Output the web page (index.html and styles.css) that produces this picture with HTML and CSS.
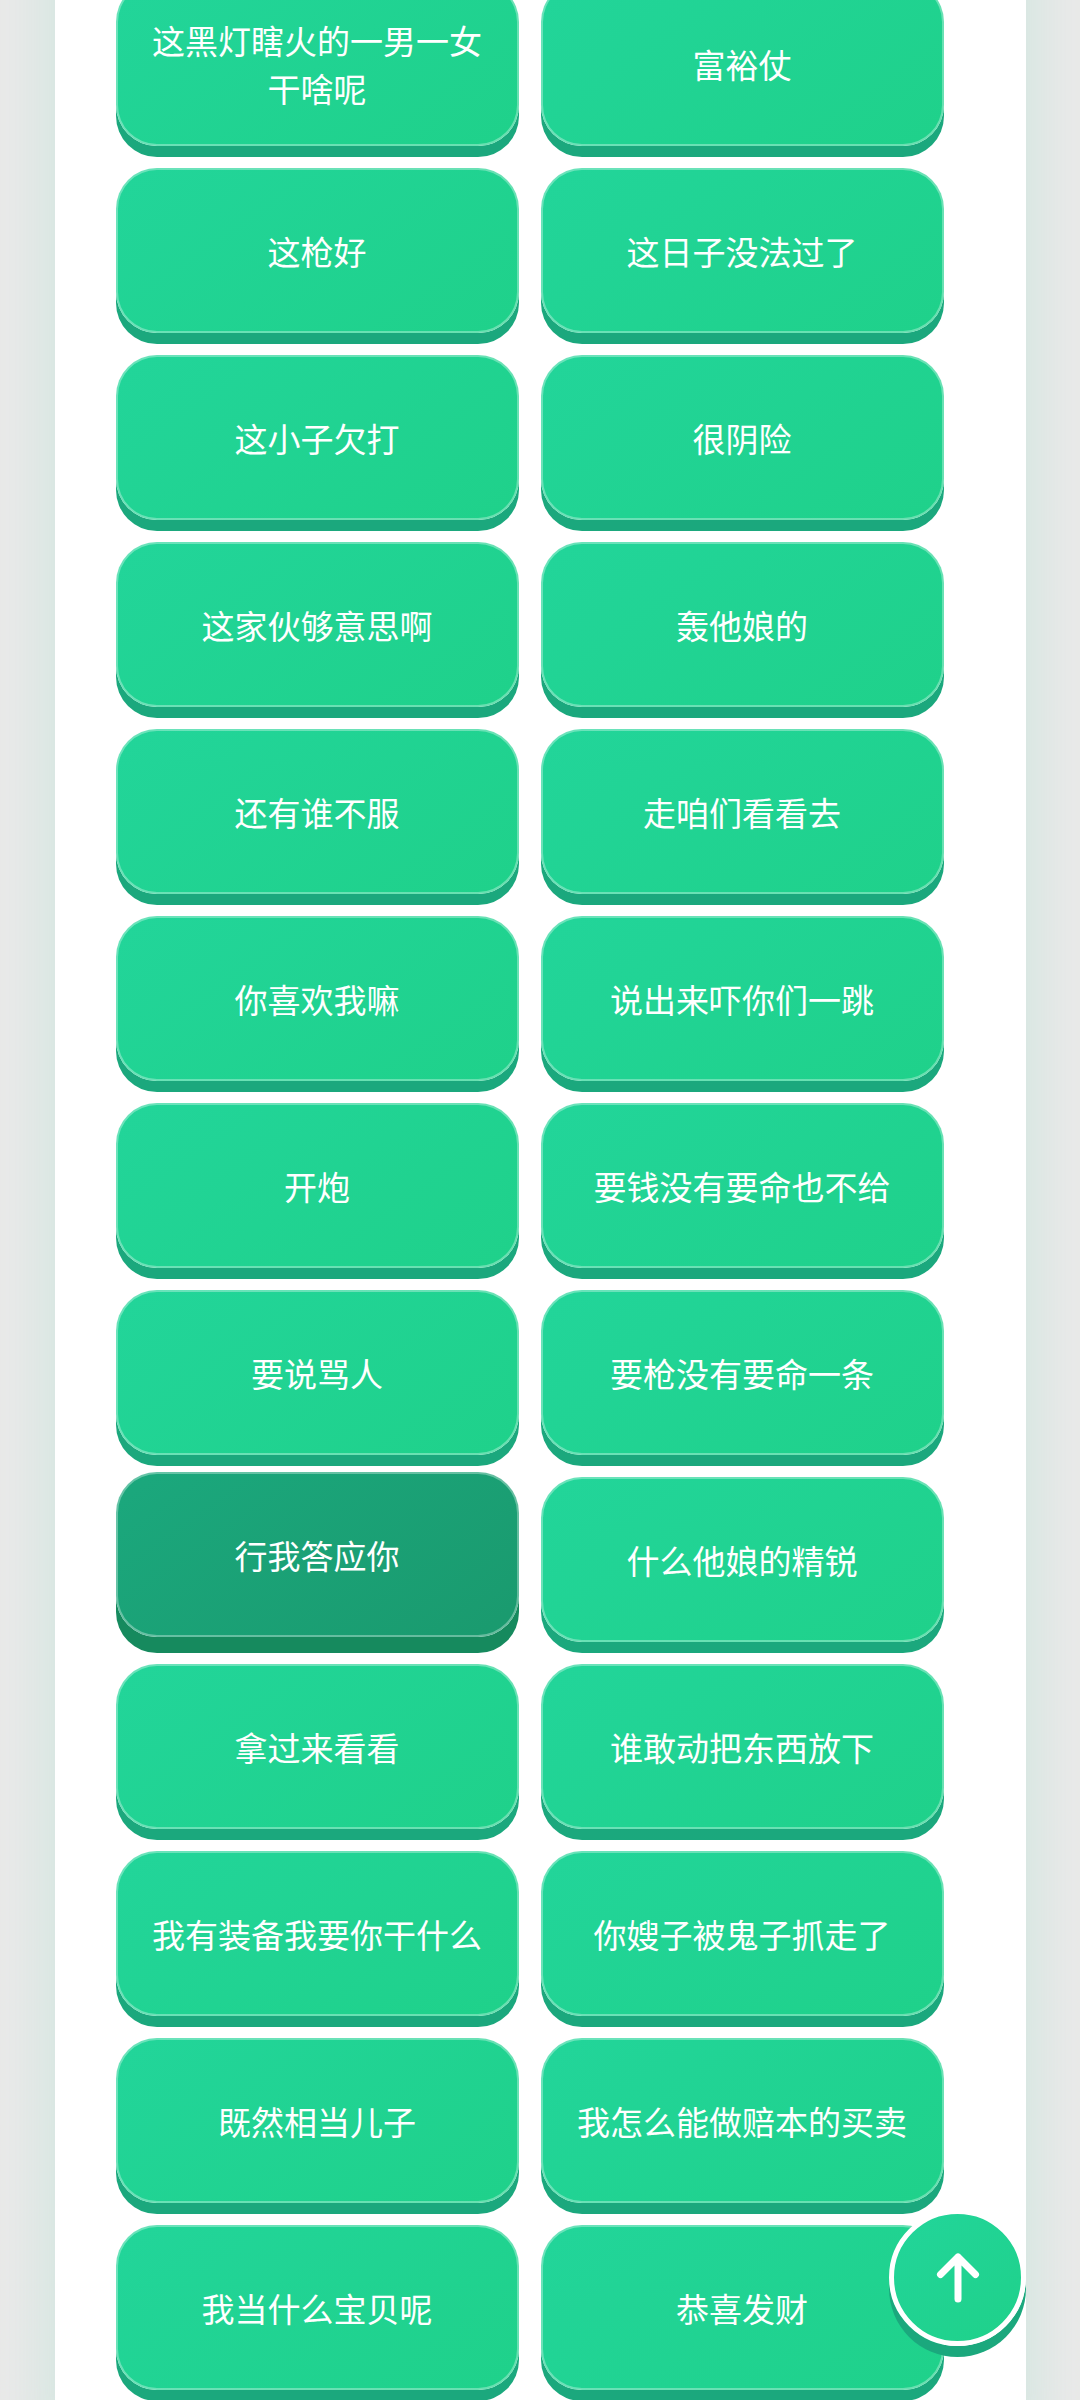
FILE: index.html
```html
<!DOCTYPE html>
<html lang="zh-CN">
  <head>
    <meta charset="UTF-8" />
    <meta name="viewport" content="width=device-width, initial-scale=1.0" />
    <title>语音按钮</title>
    <link rel="stylesheet" href="styles.css">
  </head>
  <body>
    <div class="page">
      <main class="container">
        <button class="voice-btn">这黑灯瞎火的一男一女干啥呢</button>
        <button class="voice-btn">富裕仗</button>
        <button class="voice-btn">这枪好</button>
        <button class="voice-btn">这日子没法过了</button>
        <button class="voice-btn">这小子欠打</button>
        <button class="voice-btn">很阴险</button>
        <button class="voice-btn">这家伙够意思啊</button>
        <button class="voice-btn">轰他娘的</button>
        <button class="voice-btn">还有谁不服</button>
        <button class="voice-btn">走咱们看看去</button>
        <button class="voice-btn">你喜欢我嘛</button>
        <button class="voice-btn">说出来吓你们一跳</button>
        <button class="voice-btn">开炮</button>
        <button class="voice-btn">要钱没有要命也不给</button>
        <button class="voice-btn">要说骂人</button>
        <button class="voice-btn">要枪没有要命一条</button>
        <button class="voice-btn active">行我答应你</button>
        <button class="voice-btn">什么他娘的精锐</button>
        <button class="voice-btn">拿过来看看</button>
        <button class="voice-btn">谁敢动把东西放下</button>
        <button class="voice-btn">我有装备我要你干什么</button>
        <button class="voice-btn">你嫂子被鬼子抓走了</button>
        <button class="voice-btn">既然相当儿子</button>
        <button class="voice-btn">我怎么能做赔本的买卖</button>
        <button class="voice-btn">我当什么宝贝呢</button>
        <button class="voice-btn">恭喜发财</button>
      </main>
    </div>

    <button class="back-top" aria-label="返回顶部">
      <svg viewBox="0 0 66 66" width="66" height="66">
        <path d="M33 54V12M15.5 29.5L33 12l17.5 17.5" />
      </svg>
    </button>
  </body>
</html>
```

FILE: styles.css
```css
* {
  box-sizing: border-box;
}
body {
  margin: 0;
  font-family: "Noto Sans CJK SC", sans-serif;
  background-color: #e9e9e9;
}
.page {
  height: 100vh;
  overflow-y: auto;
  scrollbar-width: none;
}
.container {
  display: grid;
  grid-template-columns: 1fr 1fr;
  gap: 22px;
  margin: -80px 54px 0 55px;
  padding: 61px 82px 61px 61px;
  background-color: #fff;
  box-shadow: 0 0 55px rgba(34, 214, 156, 0.15);
}
.voice-btn {
  min-height: 165px;
  padding: 0 33px 0 32px;
  border: 2px solid rgba(255, 255, 255, 0.33);
  border-radius: 41px;
  background: linear-gradient(145deg, #22d59a, #1fd18a) border-box;
  box-shadow: 0 11px 0 #1ba87d;
  color: #fff;
  font-family: inherit;
  font-size: 33px;
  line-height: 48px;
  cursor: pointer;
}
.voice-btn:hover,
.voice-btn.active {
  background: linear-gradient(145deg, #1ba87d, #1a9a6e) border-box;
  box-shadow: 0 16px 0 #168a5e;
  transform: translateY(-5px);
}
.back-top {
  position: fixed;
  right: 54px;
  bottom: 54px;
  display: flex;
  align-items: center;
  justify-content: center;
  width: 137px;
  height: 137px;
  padding: 0;
  border: 5px solid #fff;
  border-radius: 50%;
  background: linear-gradient(145deg, #22d59a, #1fd18a);
  box-shadow: 0 11px 0 #1ba87d;
  cursor: pointer;
}
.back-top path {
  fill: none;
  stroke: #fff;
  stroke-width: 7;
  stroke-linecap: round;
  stroke-linejoin: round;
}
```
